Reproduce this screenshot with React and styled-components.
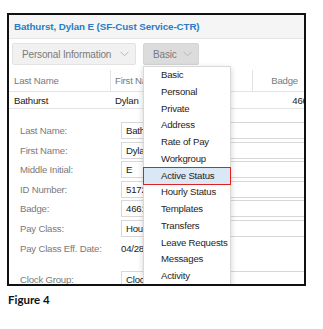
import styled, { createGlobalStyle } from 'styled-components';

const GlobalStyle = createGlobalStyle`
  body {
    margin: 0;
    background: #fff;
    font-family: "Liberation Sans", Arial, sans-serif;
  }
`;

const menuItems = [
  'Basic',
  'Personal',
  'Private',
  'Address',
  'Rate of Pay',
  'Workgroup',
  'Active Status',
  'Hourly Status',
  'Templates',
  'Transfers',
  'Leave Requests',
  'Messages',
  'Activity',
];

const fields = [
  { label: 'Last Name:', value: 'Bathurst' },
  { label: 'First Name:', value: 'Dylan' },
  { label: 'Middle Initial:', value: 'E' },
  { label: 'ID Number:', value: '517203' },
  { label: 'Badge:', value: '466103' },
  { label: 'Pay Class:', value: 'Hourly' },
  { label: 'Pay Class Eff. Date:', value: '04/28/2019', plain: true },
  { label: 'Clock Group:', value: 'Clock Group 1', gap: true },
];

const Page = styled.div`
  padding: 13px 0 0 7px;
`;

const Frame = styled.div`
  position: relative;
  box-sizing: border-box;
  width: 299px;
  height: 273px;
  border: 2px solid #111;
  overflow: hidden;
  background: #fff;
  font-size: 9.6px;
  letter-spacing: -0.2px;
`;

const Header = styled.div`
  display: flex;
  align-items: center;
  height: 23px;
  padding-left: 5px;
  background: #f5f5f5;
  border-bottom: 1px solid #e4e4e4;
  color: #2a7cc6;
  font-size: 9.8px;
  letter-spacing: -0.1px;
  font-weight: bold;
  white-space: nowrap;
`;

const Toolbar = styled.div`
  display: flex;
  gap: 7px;
  padding: 4px 0 0 3px;
`;

const DropButton = styled.div`
  box-sizing: border-box;
  display: flex;
  align-items: center;
  justify-content: space-between;
  width: ${(p) => p.$width}px;
  height: 22px;
  padding: 0 6px 0 9px;
  background: ${(p) => (p.$open ? '#dcdcdc' : '#f1f1f1')};
  border: 1px solid ${(p) => (p.$open ? '#d4d4d4' : '#e2e2e2')};
  border-radius: 2px;
  color: #7a7a7a;
  font-size: 10px;
  letter-spacing: -0.15px;
  white-space: nowrap;
`;

const Table = styled.div`
  display: grid;
  grid-template-columns: 101px 142px 70px;
  width: 313px;
`;

const HeadCell = styled.div`
  position: relative;
  display: flex;
  align-items: center;
  justify-content: ${(p) => (p.$right ? 'flex-end' : 'flex-start')};
  height: 22px;
  padding: ${(p) => (p.$right ? '4px 24px 0 0' : '4px 0 0 5px')};
  border-bottom: 1px solid #e3e3e3;
  color: #7a7a7a;
  white-space: nowrap;

  ${(p) =>
    p.$sep &&
    `
    &::before {
      content: '';
      position: absolute;
      left: 0;
      top: 5px;
      bottom: 0;
      border-left: 1px solid #e3e3e3;
    }
  `}
`;

const Cell = styled.div`
  display: flex;
  align-items: center;
  justify-content: ${(p) => (p.$right ? 'flex-end' : 'flex-start')};
  height: 16px;
  padding: ${(p) => (p.$right ? '0 4px 0 0' : '0 0 0 5px')};
  border-bottom: 1px solid #e3e3e3;
  color: #1a1a1a;
  white-space: nowrap;
`;

const Form = styled.div`
  display: flex;
  flex-direction: column;
  gap: 2.6px;
  padding: 13px 0 0 11px;
`;

const FieldRow = styled.div`
  display: flex;
  align-items: center;
  margin-top: ${(p) => (p.$gap ? '12px' : '0')};
`;

const Label = styled.div`
  width: 101px;
  flex: none;
  color: #7a7a7a;
  white-space: nowrap;
`;

const Input = styled.div`
  box-sizing: border-box;
  flex: 1;
  display: flex;
  align-items: center;
  height: 17px;
  padding-left: ${(p) => (p.$plain ? '0' : '4px')};
  border: ${(p) => (p.$plain ? 'none' : '1px solid #d8d8d8')};
  border-right: none;
  color: #1a1a1a;
  white-space: nowrap;
`;

const Menu = styled.div`
  position: absolute;
  left: 134px;
  top: 51px;
  box-sizing: border-box;
  width: 88px;
  background: #fff;
  border: 1px solid #d9d9d9;
  box-shadow: 0 2px 6px rgba(0, 0, 0, 0.18);
`;

const MenuItem = styled.div`
  height: 16.75px;
  line-height: 16.75px;
  padding-left: 17px;
  color: #1e1e1e;
  white-space: nowrap;
  background: ${(p) => (p.$active ? '#dae7f4' : 'transparent')};
  outline: ${(p) => (p.$active ? '1.5px solid #e02020' : 'none')};
`;

const Caption = styled.div`
  margin-top: 7px;
  padding-left: 1px;
  color: #111;
  font-family: Lato, "Open Sans", sans-serif;
  font-weight: bold;
  font-size: 11.5px;
`;

const Chevron = () => (
  <svg width="9" height="6" viewBox="0 0 9 6">
    <polyline points="0.5,0.8 4.5,4.8 8.5,0.8" fill="none" stroke="#b8b8b8" strokeWidth="1" />
  </svg>
);

export default function App() {
  return (
    <>
      <GlobalStyle />
      <Page>
        <Frame>
          <Header>Bathurst, Dylan E (SF-Cust Service-CTR)</Header>
          <Toolbar>
            <DropButton $width={124}>
              Personal Information <Chevron />
            </DropButton>
            <DropButton $width={56} $open>
              Basic <Chevron />
            </DropButton>
          </Toolbar>
          <Table>
            <HeadCell>Last Name</HeadCell>
            <HeadCell $sep>First Name</HeadCell>
            <HeadCell $sep $right>Badge</HeadCell>
            <Cell>Bathurst</Cell>
            <Cell>Dylan</Cell>
            <Cell $right>46613</Cell>
          </Table>
          <Form>
            {fields.map((f) => (
              <FieldRow key={f.label} $gap={f.gap}>
                <Label>{f.label}</Label>
                <Input $plain={f.plain}>{f.value}</Input>
              </FieldRow>
            ))}
          </Form>
          <Menu>
            {menuItems.map((item) => (
              <MenuItem key={item} $active={item === 'Active Status'}>
                {item}
              </MenuItem>
            ))}
          </Menu>
        </Frame>
        <Caption>Figure 4</Caption>
      </Page>
    </>
  );
}
